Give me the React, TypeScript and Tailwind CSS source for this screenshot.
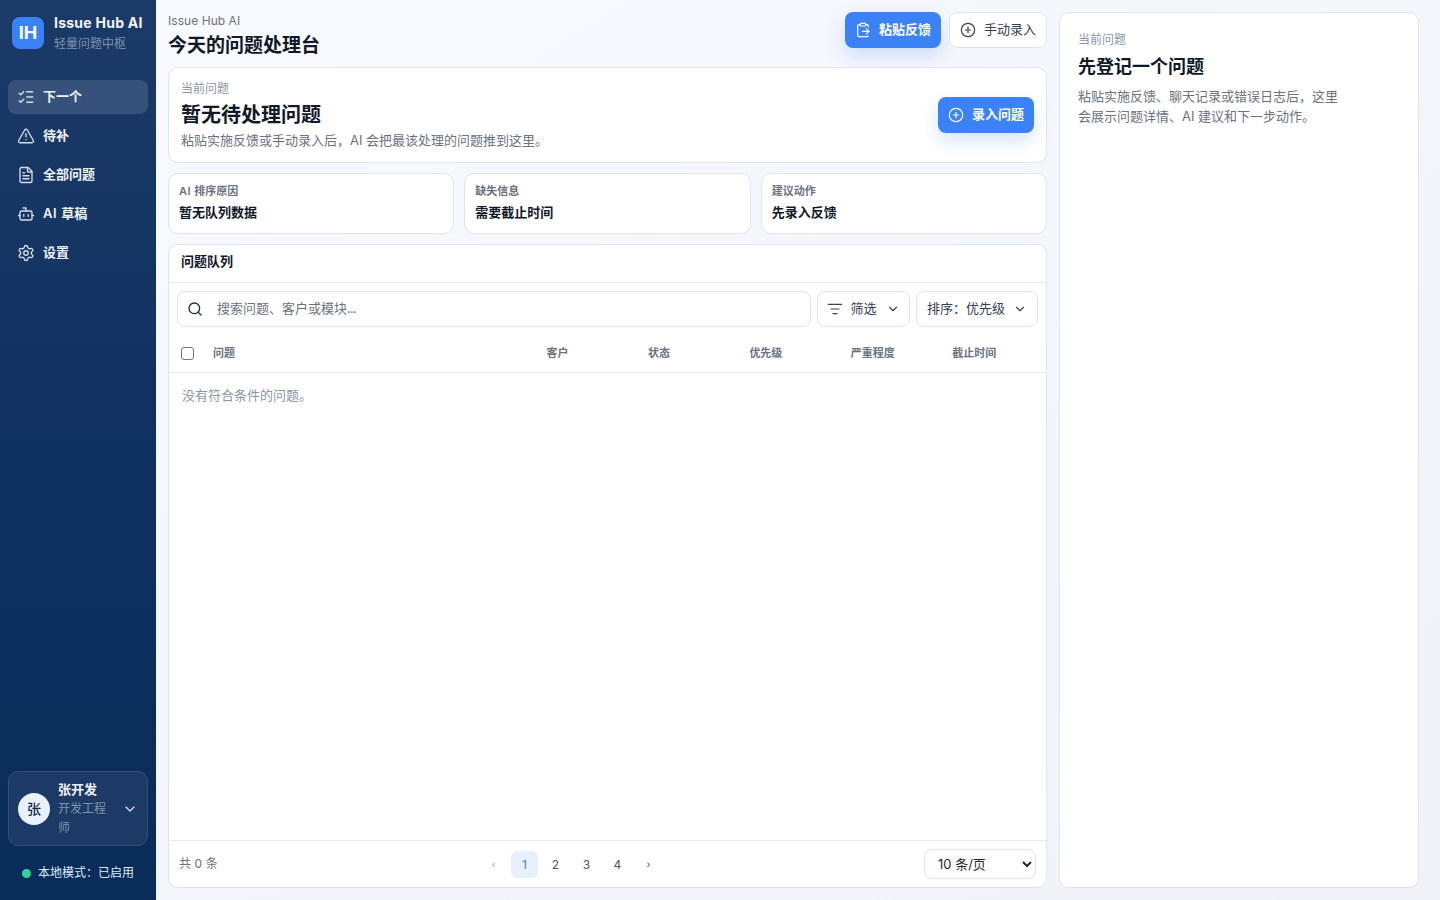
import React from "react";
import { ListChecks, TriangleAlert, FileText, Bot, Settings, ChevronDown, ClipboardPaste, CirclePlus, Search, ListFilter } from "lucide-react";

const nav = [
  { label: "下一个", icon: ListChecks, active: true },
  { label: "待补", icon: TriangleAlert },
  { label: "全部问题", icon: FileText },
  { label: "草稿", ai: true, icon: Bot },
  { label: "设置", icon: Settings },
];

const stats = [
  { k: "排序原因", ai: true, v: "暂无队列数据" },
  { k: "缺失信息", v: "需要截止时间" },
  { k: "建议动作", v: "先录入反馈" },
];

const cols = ["客户", "状态", "优先级", "严重程度", "截止时间"];

export default function App() {
  return (
    <div
      className="flex h-[900px] w-[1440px] overflow-hidden bg-gradient-to-br from-[#f8faff] to-[#f0f2f7] text-[#111827]"
      style={{ fontFamily: 'Inter, "Noto Sans CJK SC", sans-serif' }}
    >
      <aside className="flex w-[156px] shrink-0 flex-col bg-gradient-to-b from-[#1c3a67] via-[#0f3160] via-50% to-[#0a2c58] px-2 pt-[13px] pb-4">
        <div className="flex items-center gap-2.5 pl-1">
          <div className="flex h-8 w-8 items-center justify-center rounded-lg bg-[#3b82f6] text-lg font-bold text-white">IH</div>
          <div className="whitespace-nowrap">
            <div className="text-sm leading-[19px] font-bold tracking-[0.25px] text-[#f1f5f9]">Issue Hub AI</div>
            <div className="mt-[3px] text-xs leading-[18px] text-[#7f93ad]">轻量问题中枢</div>
          </div>
        </div>
        <nav className="mt-[27px] flex flex-col gap-[5px]">
          {nav.map((n) => (
            <div
              key={n.label}
              className={`flex h-[34px] items-center gap-2 rounded-lg px-[9px] text-[13px] font-semibold text-[#eef2f8] ${n.active ? "bg-[#37527a]" : ""}`}
            >
              <n.icon size={18} strokeWidth={1.8} className="text-[#d5dde8]" />
              <span>
                {n.ai ? <span className="tracking-[0.6px]">AI </span> : null}
                {n.label}
              </span>
            </div>
          ))}
        </nav>
        <div className="mt-auto flex h-[75px] items-center rounded-[10px] border border-[#33507a] bg-[#1c3a65] pr-[9px] pl-[9px]">
          <div className="flex h-8 w-8 shrink-0 items-center justify-center rounded-full bg-[#eaf1fe] text-sm font-medium text-[#13294b]">张</div>
          <div className="ml-2 w-[50px] shrink-0">
            <div className="text-[13px] leading-[19px] font-semibold text-[#eef2f8]">张开发</div>
            <div className="text-xs leading-[19px] text-[#7f93ad]">开发工程师</div>
          </div>
          <ChevronDown size={16} className="ml-auto text-[#d5dde8]" />
        </div>
        <div className="mt-[19px] mb-[3px] flex items-center gap-[7px] pl-[14px] text-xs leading-4 whitespace-nowrap text-[#dbeafe]">
          <span className="h-[9px] w-[9px] rounded-full bg-[#34d399]" />
          本地模式：已启用
        </div>
      </aside>

      <main className="grid min-w-0 flex-1 grid-cols-[879px_360px] gap-3 pt-3 pr-[21px] pb-3 pl-3">
        <div className="flex min-w-0 flex-col">
          <header className="flex h-[45px] items-start justify-between">
            <div>
              <div className="text-xs leading-[18px] tracking-[0.05px] text-[#6b7280]">Issue Hub AI</div>
              <h1 className="mt-[3px] text-[19px] leading-[26px] font-bold text-[#111827]">今天的问题处理台</h1>
            </div>
            <div className="flex gap-2">
              <button className="flex h-9 w-[96px] items-center justify-center gap-2 rounded-lg bg-[#3b82f6] text-[13px] font-semibold text-white shadow-[0_8px_18px_rgba(59,130,246,0.22)]">
                <ClipboardPaste size={16} strokeWidth={1.75} />
                粘贴反馈
              </button>
              <button className="flex h-9 w-[98px] items-center justify-center gap-2 rounded-lg border border-[#dfe5ef] bg-white text-[13px] text-[#374151]">
                <CirclePlus size={16} strokeWidth={1.75} />
                手动录入
              </button>
            </div>
          </header>

          <section className="mt-[10px] flex h-[96px] shrink-0 items-center justify-between rounded-[10px] border border-[#dfe5ef] bg-white pr-3 pl-3">
            <div>
              <div className="text-xs leading-[18px] text-[#8b95a5]">当前问题</div>
              <h2 className="mt-[3px] text-xl leading-[28px] font-bold text-[#111827]">暂无待处理问题</h2>
              <p className="mt-[1px] text-[13px] leading-[20px] text-[#6b7280]">粘贴实施反馈或手动录入后，AI 会把最该处理的问题推到这里。</p>
            </div>
            <button className="flex h-9 w-[96px] items-center justify-center gap-2 rounded-lg bg-[#3b82f6] text-[13px] font-semibold text-white shadow-[0_8px_18px_rgba(59,130,246,0.22)]">
              <CirclePlus size={16} strokeWidth={1.75} />
              录入问题
            </button>
          </section>

          <section className="mt-[10px] grid h-[61px] shrink-0 grid-cols-3 gap-[10px]">
            {stats.map((s) => (
              <div key={s.k} className="rounded-[10px] border border-[#dfe5ef] bg-white px-[10px] pt-[9px]">
                <div className="text-[11px] leading-4 font-semibold text-[#6b7280]">
                  {s.ai ? <span className="tracking-[0.5px]">AI </span> : null}
                  {s.k}
                </div>
                <div className="mt-[3px] text-[13px] leading-[20px] font-semibold text-[#111827]">{s.v}</div>
              </div>
            ))}
          </section>

          <section className="mt-[10px] flex min-h-0 flex-1 flex-col rounded-[10px] border border-[#dfe5ef] bg-white">
            <div className="flex h-[38px] shrink-0 items-center border-b border-[#e6ebf3] px-3 pb-1 text-[13px] font-semibold text-[#111827]">问题队列</div>
            <div className="flex shrink-0 gap-[6px] px-2 pt-2">
              <div className="flex h-9 flex-1 items-center gap-[14px] rounded-lg border border-[#dfe5ef] bg-white pl-[9px]">
                <Search size={16} strokeWidth={1.9} className="text-[#1f2937]" />
                <span className="text-[13px] text-[#6b7280]">
                  搜索问题、客户或模块<span className="tracking-[-0.7px]">...</span>
                </span>
              </div>
              <div className="flex h-9 w-[93px] items-center justify-center gap-2 rounded-lg border border-[#dfe5ef] bg-white text-[13px] text-[#374151]">
                <ListFilter size={16} strokeWidth={1.75} />
                <span className="-ml-px mr-px">筛选</span>
                <ChevronDown size={14} />
              </div>
              <div className="flex h-9 w-[122px] items-center justify-center gap-2 rounded-lg border border-[#dfe5ef] bg-white text-[13px] text-[#374151]">
                排序：优先级
                <ChevronDown size={14} />
              </div>
            </div>
            <div className="flex h-[46px] shrink-0 items-center border-b border-[#e6ebf3] pt-[7px] pl-3 text-[11px] font-semibold text-[#6b7280]">
              <input type="checkbox" className="h-[13px] w-[13px] shrink-0 appearance-none rounded-[3px] border border-[#767676] bg-white" />
              <div className="ml-[19px] w-[333.6px] shrink-0">问题</div>
              {cols.map((c) => (
                <div key={c} className="w-[101.4px] shrink-0 last:w-[70px]">{c}</div>
              ))}
            </div>
            <div className="flex-1 px-[13px] pt-3 text-[13px] leading-[20px] text-[#8b95a5]">没有符合条件的问题。</div>
            <div className="relative flex h-[47px] shrink-0 items-center justify-between border-t border-[#e6ebf3] pr-[10px] pl-[10px]">
              <span className="text-xs tracking-[0.1px] text-[#6b7280]">共 0 条</span>
              <div className="absolute top-[10px] left-[311px] flex items-center gap-1 text-xs text-[#4b5563]">
                <span className="flex h-[27px] w-[27px] items-center justify-center text-[10px] text-[#9ca3af]">‹</span>
                <span className="flex h-[27px] w-[27px] items-center justify-center rounded-md bg-[#e9f0fd] text-[#3b82f6]">1</span>
                <span className="flex h-[27px] w-[27px] items-center justify-center">2</span>
                <span className="flex h-[27px] w-[27px] items-center justify-center">3</span>
                <span className="flex h-[27px] w-[27px] items-center justify-center">4</span>
                <span className="flex h-[27px] w-[27px] items-center justify-center text-[10px]">›</span>
              </div>
              <select className="h-[30px] w-[112px] rounded-lg border border-[#dfe5ef] bg-white pl-[9px] text-[13px] text-[#1f2937]" defaultValue="10">
                <option value="10">10 条/页</option>
              </select>
            </div>
          </section>
        </div>

        <aside className="rounded-[10px] border border-[#dfe5ef] bg-white px-[18px] pt-[18px]">
          <div className="text-xs leading-[18px] text-[#8b95a5]">当前问题</div>
          <h2 className="mt-[5px] text-lg leading-[26px] font-bold text-[#111827]">先登记一个问题</h2>
          <p className="mt-[6px] w-[265px] text-[13px] leading-[20px] text-[#6b7280]">粘贴实施反馈、聊天记录或错误日志后，这里会展示问题详情、AI 建议和下一步动作。</p>
        </aside>
      </main>
    </div>
  );
}
